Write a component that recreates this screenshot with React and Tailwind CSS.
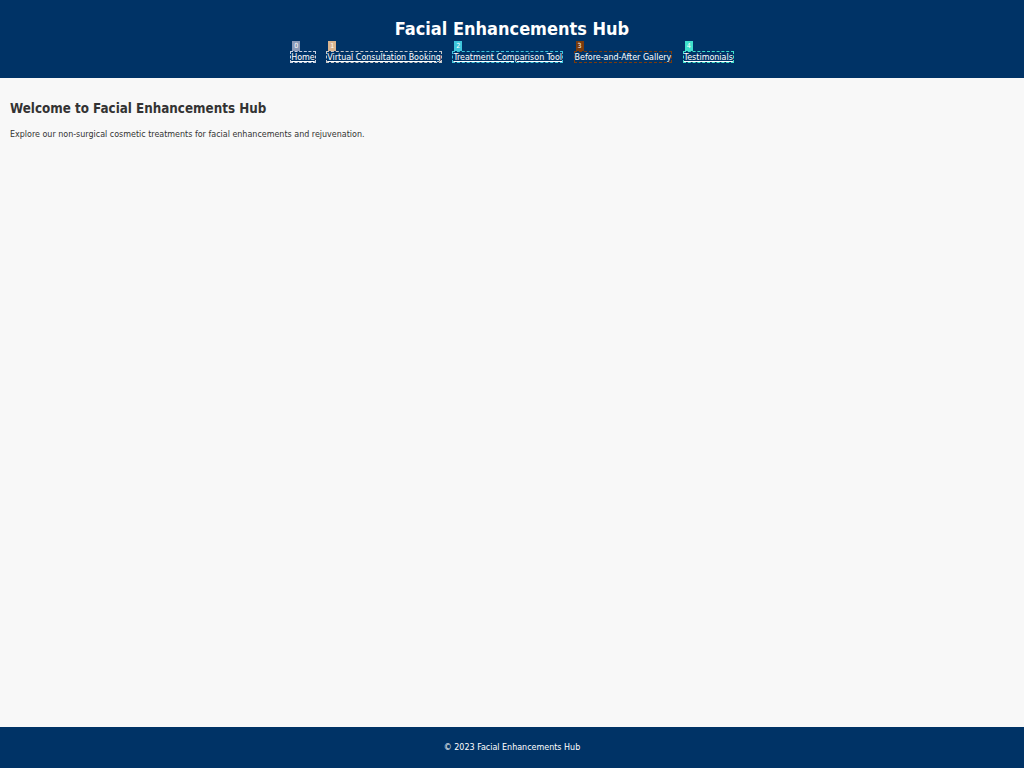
import React from "react";

const links = [
  { label: "Home", n: "0", badge: "bg-[#8a9ab8]", border: "border-[#c8d0e0]" },
  { label: "Virtual Consultation Booking", n: "1", badge: "bg-[#d9b48f]", border: "border-[#c8c8c8]" },
  { label: "Treatment Comparison Tool", n: "2", badge: "bg-[#3ec6dc]", border: "border-[#3ec6dc]" },
  { label: "Before-and-After Gallery", n: "3", badge: "bg-[#7a3b0c]", border: "border-[#7a3b0c]" },
  { label: "Testimonials", n: "4", badge: "bg-[#3ee0cc]", border: "border-[#3ee0cc]" },
];

export default function App() {
  return (
    <div className="min-h-[768px] flex flex-col bg-[#f8f8f8] text-[#333333]" style={{ fontFamily: '"DejaVu Sans Condensed", "DejaVu Sans", sans-serif', fontStretch: "condensed" }}>
      <header className="bg-[#003366] text-white h-[78px] flex flex-col items-center pt-[15px]">
        <h1 className="text-[18px] font-bold leading-[28px]">Facial Enhancements Hub</h1>
        <nav className="flex gap-[10.5px] mt-[8px]">
          {links.map((l) => (
            <a key={l.n} className={`relative border border-dashed ${l.border} text-[8.9px] leading-[10px] text-white ${l.n === "3" ? "" : "underline"}`}>
              <span className={`absolute left-[1px] -top-[11px] w-[8px] h-[10px] ${l.badge} text-[7px] leading-[10px] text-center text-white`}>{l.n}</span>
              {l.label}
            </a>
          ))}
        </nav>
      </header>
      <main className="flex-1 px-[10px] pt-[21px]">
        <h2 className="text-[13.3px] font-bold leading-[20px]">Welcome to Facial Enhancements Hub</h2>
        <p className="text-[8.9px] mt-[9px]">Explore our non-surgical cosmetic treatments for facial enhancements and rejuvenation.</p>
      </main>
      <footer className="bg-[#003366] text-white h-[41px] flex items-center justify-center text-[8.9px]">© 2023 Facial Enhancements Hub</footer>
    </div>
  );
}
